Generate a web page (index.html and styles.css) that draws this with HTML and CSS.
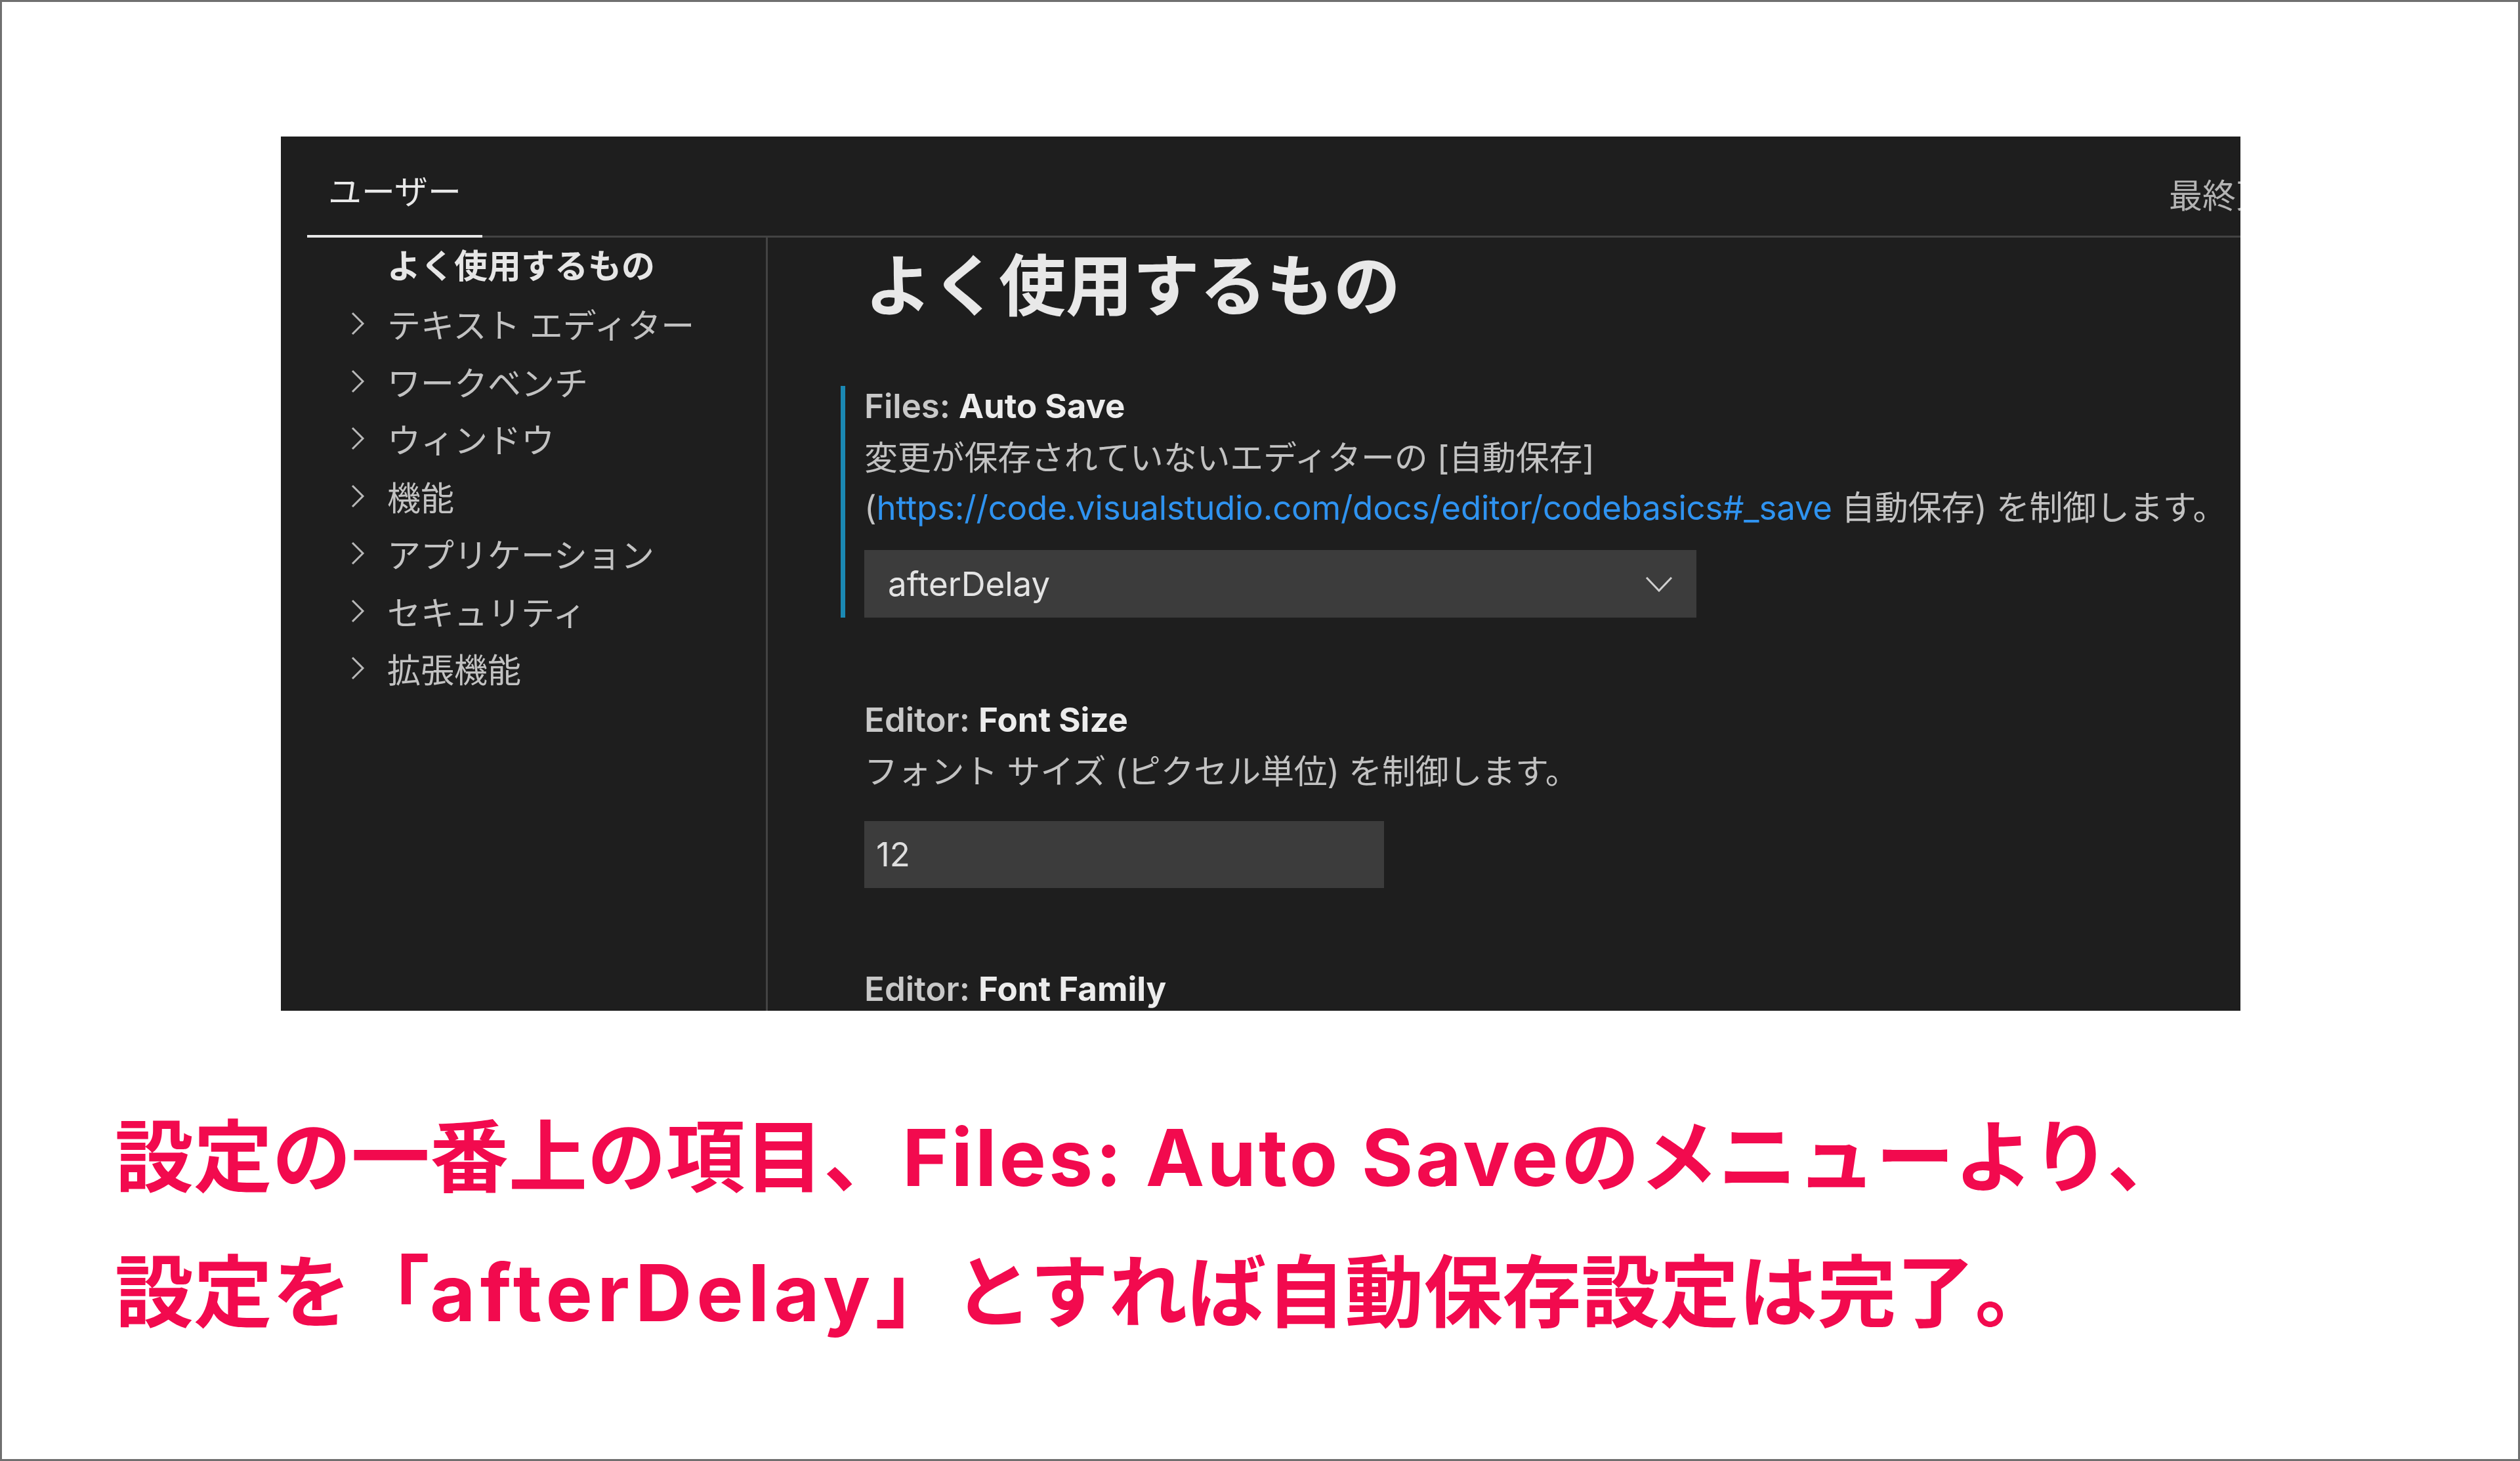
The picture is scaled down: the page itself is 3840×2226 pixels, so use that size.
FILE: index.html
```html
<!DOCTYPE html>
<html lang="ja">
<head>
    <meta charset="UTF-8">
    <title>自動保存の設定</title>
    <link rel="stylesheet" href="styles.css">
</head>
<body>

    <!-- Settings editor screenshot -->
    <div class="shot">
        <div class="tabs">
            <div class="tab">ユーザー</div>
            <div class="sync">最終更新日時</div>
        </div>

        <div class="shot-body">
            <!-- Table of contents -->
            <nav class="toc">
                <div class="toc-head">よく使用するもの</div>
                <div class="toc-item"><svg class="chev" viewBox="0 0 24 40"><polyline points="4,4 20,20 4,36"/></svg><span>テキスト エディター</span></div>
                <div class="toc-item"><svg class="chev" viewBox="0 0 24 40"><polyline points="4,4 20,20 4,36"/></svg><span>ワークベンチ</span></div>
                <div class="toc-item"><svg class="chev" viewBox="0 0 24 40"><polyline points="4,4 20,20 4,36"/></svg><span>ウィンドウ</span></div>
                <div class="toc-item"><svg class="chev" viewBox="0 0 24 40"><polyline points="4,4 20,20 4,36"/></svg><span>機能</span></div>
                <div class="toc-item"><svg class="chev" viewBox="0 0 24 40"><polyline points="4,4 20,20 4,36"/></svg><span>アプリケーション</span></div>
                <div class="toc-item"><svg class="chev" viewBox="0 0 24 40"><polyline points="4,4 20,20 4,36"/></svg><span>セキュリティ</span></div>
                <div class="toc-item"><svg class="chev" viewBox="0 0 24 40"><polyline points="4,4 20,20 4,36"/></svg><span>拡張機能</span></div>
            </nav>

            <!-- Settings list -->
            <div class="settings">
                <h1 class="group-title">よく使用するもの</h1>

                <div class="setting focused">
                    <div class="setting-title"><span class="cat">Files: </span><span class="label">Auto Save</span></div>
                    <div class="setting-desc">
                        変更が保存されていないエディターの [自動保存]<br>
                        (<a href="#">https://code.visualstudio.com/docs/editor/codebasics#_save</a> 自動保存) を制御します。
                    </div>
                    <div class="select">
                        <span>afterDelay</span>
                        <svg class="select-arrow" viewBox="0 0 42 24"><polyline points="2,2 21,22 40,2"/></svg>
                    </div>
                </div>

                <div class="setting">
                    <div class="setting-title"><span class="cat">Editor: </span><span class="label">Font Size</span></div>
                    <div class="setting-desc">フォント サイズ (ピクセル単位) を制御します。</div>
                    <div class="num-input">12</div>
                </div>

                <div class="setting">
                    <div class="setting-title"><span class="cat">Editor: </span><span class="label">Font Family</span></div>
                </div>
            </div>
        </div>
    </div>

    <p class="caption">設定の一番上の項目、<span class="en">Files: Auto Save</span>のメニューより、<br>設定を「<span class="en wide">afterDelay</span>」とすれば自動保存設定は完了。</p>

</body>
</html>
```

FILE: styles.css
```css
body {
    margin: 0;
    width: 3840px;
    height: 2226px;
    box-sizing: border-box;
    border: 3px solid #707070;
    background-color: #ffffff;
    overflow: hidden;
    font-family: 'Inter', 'Noto Sans CJK JP', sans-serif;
}

.shot {
    margin: 205px 0 0 425px;
    width: 2986px;
    height: 1332px;
    background-color: #1e1e1e;
    overflow: hidden;
    font-size: 51px;
    color: #c4c4c4;
}

/* header with the user tab */
.tabs {
    display: flex;
    height: 154px;
    box-sizing: border-box;
    margin-left: 40px;
    border-bottom: 3px solid #434343;
}

.tab {
    padding: 55px 32px 0;
    line-height: 60px;
    color: #e8e8e8;
    border-bottom: 4px solid #e8e8e8;
    margin-bottom: -3px;
}

.sync {
    margin-left: auto;
    width: 109px;
    padding-top: 61px;
    line-height: 60px;
    white-space: nowrap;
    overflow: hidden;
    color: #b4b4b4;
}

.shot-body {
    display: flex;
    height: 1178px;
}

/* table of contents */
.toc {
    flex: 0 0 742px;
    box-sizing: border-box;
    border-right: 3px solid #434343;
}

.toc-head {
    height: 87.5px;
    line-height: 87.5px;
    padding-left: 162px;
    font-weight: 700;
    color: #e6e6e6;
}

.toc-item {
    display: flex;
    align-items: center;
    gap: 33px;
    height: 87.5px;
    padding-left: 105px;
    color: #c2c2c2;
}

.chev {
    width: 24px;
    height: 40px;
    flex-shrink: 0;
}

.chev polyline {
    fill: none;
    stroke: #b8b8b8;
    stroke-width: 3;
}

/* settings list */
.settings {
    flex: 1;
    min-width: 0;
    padding-left: 111px;
}

.group-title {
    margin: 4px 0 0;
    padding-left: 37px;
    height: 140px;
    line-height: 140px;
    font-size: 102px;
    font-weight: 700;
    color: #e8e8e8;
}

.setting {
    margin-top: 125px;
    border-left: 7px solid transparent;
    padding-left: 29px;
}

.setting.focused {
    margin-top: 82px;
    border-left-color: #1b89b4;
}

.setting + .setting + .setting {
    margin-top: 123px;
}

.setting-title {
    line-height: 62px;
    font-weight: 600;
}

.setting-title .cat {
    color: #c8c8c8;
}

.setting-title .label {
    color: #ececec;
    font-weight: 700;
}

.setting-desc {
    margin-top: 9.5px;
    line-height: 76px;
    white-space: nowrap;
    color: #c2c2c2;
    letter-spacing: -0.2px;
}

.setting-desc a {
    color: #2f93f0;
    text-decoration: none;
}

.select {
    display: flex;
    align-items: center;
    justify-content: space-between;
    margin-top: 26.5px;
    width: 1268px;
    height: 103px;
    box-sizing: border-box;
    padding: 0 36px;
    background-color: #3c3c3c;
    color: #e4e4e4;
}

.select-arrow {
    width: 42px;
    height: 24px;
}

.select-arrow polyline {
    fill: none;
    stroke: #cfcfcf;
    stroke-width: 3;
}

.num-input {
    margin-top: 37.5px;
    width: 792px;
    height: 102px;
    box-sizing: border-box;
    padding-left: 18px;
    line-height: 102px;
    background-color: #3c3c3c;
    color: #dedede;
}

/* red explanation under the screenshot */
.caption {
    margin: 121px 0 0 172px;
    font-family: 'Inter', 'Noto Sans CJK JP', sans-serif;
    font-size: 120px;
    line-height: 206px;
    font-weight: 700;
    color: #f20a4e;
    white-space: nowrap;
}

.caption .en {
    letter-spacing: 4px;
}

.caption .en.wide {
    letter-spacing: 7px;
}
```
